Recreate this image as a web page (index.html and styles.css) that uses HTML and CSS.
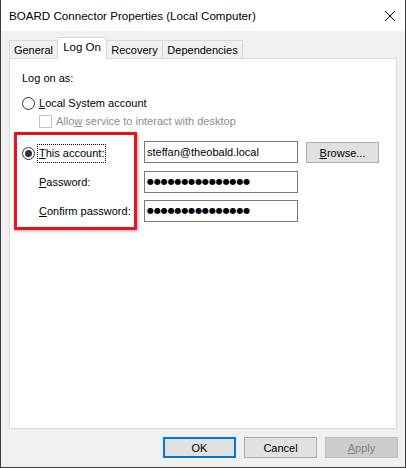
FILE: index.html
```html
<!DOCTYPE html>
<html lang="en">
<head>
  <meta charset="UTF-8">
  <title>BOARD Connector Properties (Local Computer)</title>
  <link rel="stylesheet" href="styles.css">
</head>
<body>
  <div class="window">
    <!-- Title bar -->
    <div class="titlebar">
      <span class="title">BOARD Connector Properties (Local Computer)</span>
      <svg class="close" width="12" height="12" viewBox="0 0 12 12">
        <path d="M1 1 L11 11 M11 1 L1 11" stroke="#000" stroke-width="1" fill="none"/>
      </svg>
    </div>

    <div class="client">
      <!-- Tabs -->
      <div class="tabs">
        <div class="tab tab-general">General</div>
        <div class="tab tab-logon active">Log On</div>
        <div class="tab tab-recovery">Recovery</div>
        <div class="tab tab-deps">Dependencies</div>
      </div>

      <div class="panel">
        <div class="caption">Log on as:</div>

        <div class="option">
          <span class="radio"></span>
          <span><u>L</u>ocal System account</span>
        </div>

        <div class="option sub disabled">
          <span class="check"></span>
          <span>Allo<u>w</u> service to interact with desktop</span>
        </div>

        <div class="account">
          <div class="highlight"></div>
          <div class="option">
            <span class="radio checked"></span>
            <span class="focus"><u>T</u>his account:</span>
          </div>
          <div class="field">steffan@theobald.local</div>
          <button class="btn">
            <u>B</u>rowse...</button>

          <div class="label"><u>P</u>assword:</div>
          <div class="field dots">●●●●●●●●●●●●●●●</div>
          <div></div>

          <div class="label"><u>C</u>onfirm password:</div>
          <div class="field dots">●●●●●●●●●●●●●●●</div>
          <div></div>
        </div>
      </div>

      <!-- Dialog buttons -->
      <div class="actions">
        <button class="btn default">OK</button>
        <button class="btn">Cancel</button>
        <button class="btn" disabled><u>A</u>pply</button>
      </div>
    </div>
  </div>
</body>
</html>
```

FILE: styles.css
```css
body {
  margin: 0;
  padding: 0;
  font-family: "Liberation Sans", Arial, sans-serif;
  font-size: 11px;
  color: #000;
}

.window {
  width: 404px;
  height: 467px;
  border: 1px solid #3c3c3c;
  border-top: none;
  display: flex;
  flex-direction: column;
  background: #f0f0f0;
}

.titlebar {
  height: 31px;
  background: #fff;
  display: flex;
  align-items: center;
  justify-content: space-between;
  padding: 0 9px 0 8px;
}

.title {
  font-size: 11.6px;
}

.close {
  margin-top: 1px;
}

.client {
  flex: 1;
  display: flex;
  flex-direction: column;
  padding: 6px 8px 0 8px;
}

/* Tabs */
.tabs {
  display: flex;
  align-items: flex-end;
  height: 21px;
  position: relative;
  z-index: 1;
}

.tab {
  height: 18px;
  line-height: 18px;
  text-align: center;
  border: 1px solid #d9d9d9;
  border-bottom: none;
  border-left: none;
  background: #f0f0f0;
  box-sizing: border-box;
}

.tab:first-child {
  border-left: 1px solid #d9d9d9;
}

.tab-general { width: 49px; }
.tab-logon { width: 49px; }
.tab-recovery { width: 56px; }
.tab-deps { width: 80px; }

.tab.active {
  height: 22px;
  line-height: 19px;
  margin-bottom: -1px;
  background: #fff;
  border-left: none;
  font-size: 11.5px;
}

.panel {
  height: 371px;
  box-sizing: border-box;
  background: #fff;
  border: 1px solid #d9d9d9;
  padding: 11px 12px 0 12px;
}

.caption {
  line-height: 16px;
}

.option {
  display: flex;
  align-items: center;
  gap: 4px;
  height: 16px;
  margin-top: 9px;
}

.option.sub {
  margin-top: 2px;
  padding-left: 17px;
}

.disabled {
  color: #8d8d8d;
}

.radio {
  width: 11px;
  height: 11px;
  border: 1px solid #333;
  border-radius: 50%;
  background: #fff;
  display: flex;
  align-items: center;
  justify-content: center;
}

.radio.checked::after {
  content: "";
  width: 7px;
  height: 7px;
  border-radius: 50%;
  background: #333;
}

.check {
  width: 11px;
  height: 11px;
  border: 1px solid #c3c3c3;
  background: #fff;
}

.focus {
  outline: 1px dotted #000;
  outline-offset: 1px;
  line-height: 15px;
}

/* Account fields */
.account {
  position: relative;
  display: grid;
  grid-template-columns: 114px 154px 73px;
  grid-template-rows: 30px 29px 22px;
  column-gap: 8px;
  margin-top: 12px;
}

.account .option {
  margin-top: 4px;
}

.label {
  height: 22px;
  line-height: 22px;
  padding-left: 17px;
}

.field {
  height: 22px;
  box-sizing: border-box;
  border: 1px solid #7a7a7a;
  padding: 0 2px;
  line-height: 20px;
  white-space: nowrap;
  overflow: hidden;
}

.field.dots {
  font-family: "DejaVu Sans", sans-serif;
  font-size: 8px;
  letter-spacing: -0.1px;
}

.highlight {
  position: absolute;
  left: -8px;
  top: -9px;
  width: 117px;
  height: 92px;
  border: 3px solid #e8141c;
  box-shadow: 1px 1px 3px rgba(0, 0, 0, 0.35);
  pointer-events: none;
}

/* Buttons */
.btn {
  font-family: inherit;
  font-size: 11px;
  height: 21px;
  width: 73px;
  padding: 0;
  background: #e1e1e1;
  border: 1px solid #adadad;
  color: #000;
  box-sizing: border-box;
  margin-top: 1px;
}

.btn.default {
  border: 2px solid #0078d7;
}

.btn:disabled {
  background: #cccccc;
  border-color: #bfbfbf;
  color: #838383;
}

.actions {
  display: flex;
  justify-content: flex-end;
  gap: 8px;
  padding: 8px 0 0 0;
  margin-right: -1px;
}

.actions .btn {
  margin-top: 0;
}
```
